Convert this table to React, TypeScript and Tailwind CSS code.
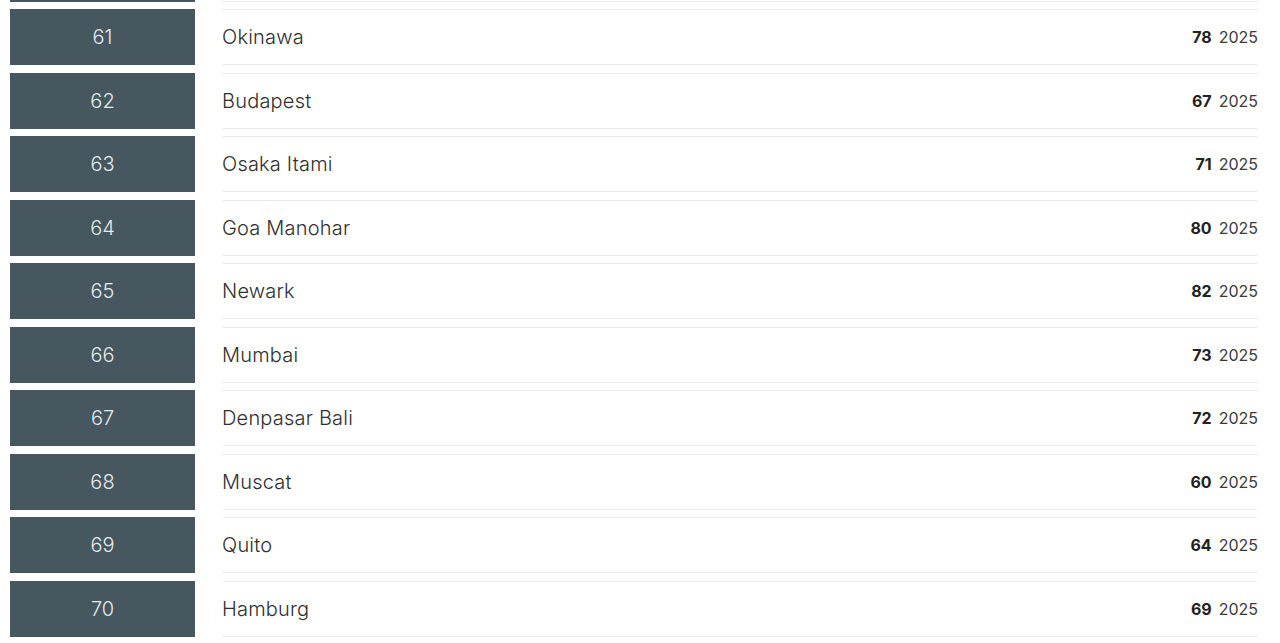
const rows = [
  { rank: 61, name: "Okinawa", score: 78 },
  { rank: 62, name: "Budapest", score: 67 },
  { rank: 63, name: "Osaka Itami", score: 71 },
  { rank: 64, name: "Goa Manohar", score: 80 },
  { rank: 65, name: "Newark", score: 82 },
  { rank: 66, name: "Mumbai", score: 73 },
  { rank: 67, name: "Denpasar Bali", score: 72 },
  { rank: 68, name: "Muscat", score: 60 },
  { rank: 69, name: "Quito", score: 64 },
  { rank: 70, name: "Hamburg", score: 69 },
]

export default function App() {
  return (
    <div className="h-[643px] overflow-hidden bg-white font-['Inter',sans-serif]">
      <div className="flex flex-col gap-[7.5px] pl-[10px] pr-[22px] mt-[-54.5px]">
        {/* previous row, mostly scrolled off */}
        <div className="flex h-[56px] items-stretch">
          <div className="w-[185px] shrink-0 bg-[#46575f]" />
          <div className="ml-[27px] flex-1 border-y border-[#ececec]" />
        </div>
        {rows.map((r) => (
          <div key={r.rank} className="flex h-[56px] items-stretch">
            {/* rank box */}
            <div className="w-[185px] shrink-0 bg-[#46575f] flex items-center justify-center text-[20px] font-light text-[#e4eaec]">
              {r.rank}
            </div>
            {/* name + score */}
            <div className="ml-[27px] flex flex-1 items-center justify-between border-y border-[#ececec]">
              <span className="text-[20px] font-light tracking-[0.2px] text-[#2f2f2f]">{r.name}</span>
              <span className="flex items-center gap-[7px] text-[16px] text-[#3a3a3a]">
                <b className="font-bold text-[#222]">{r.score}</b>
                <span>2025</span>
              </span>
            </div>
          </div>
        ))}
      </div>
    </div>
  )
}
